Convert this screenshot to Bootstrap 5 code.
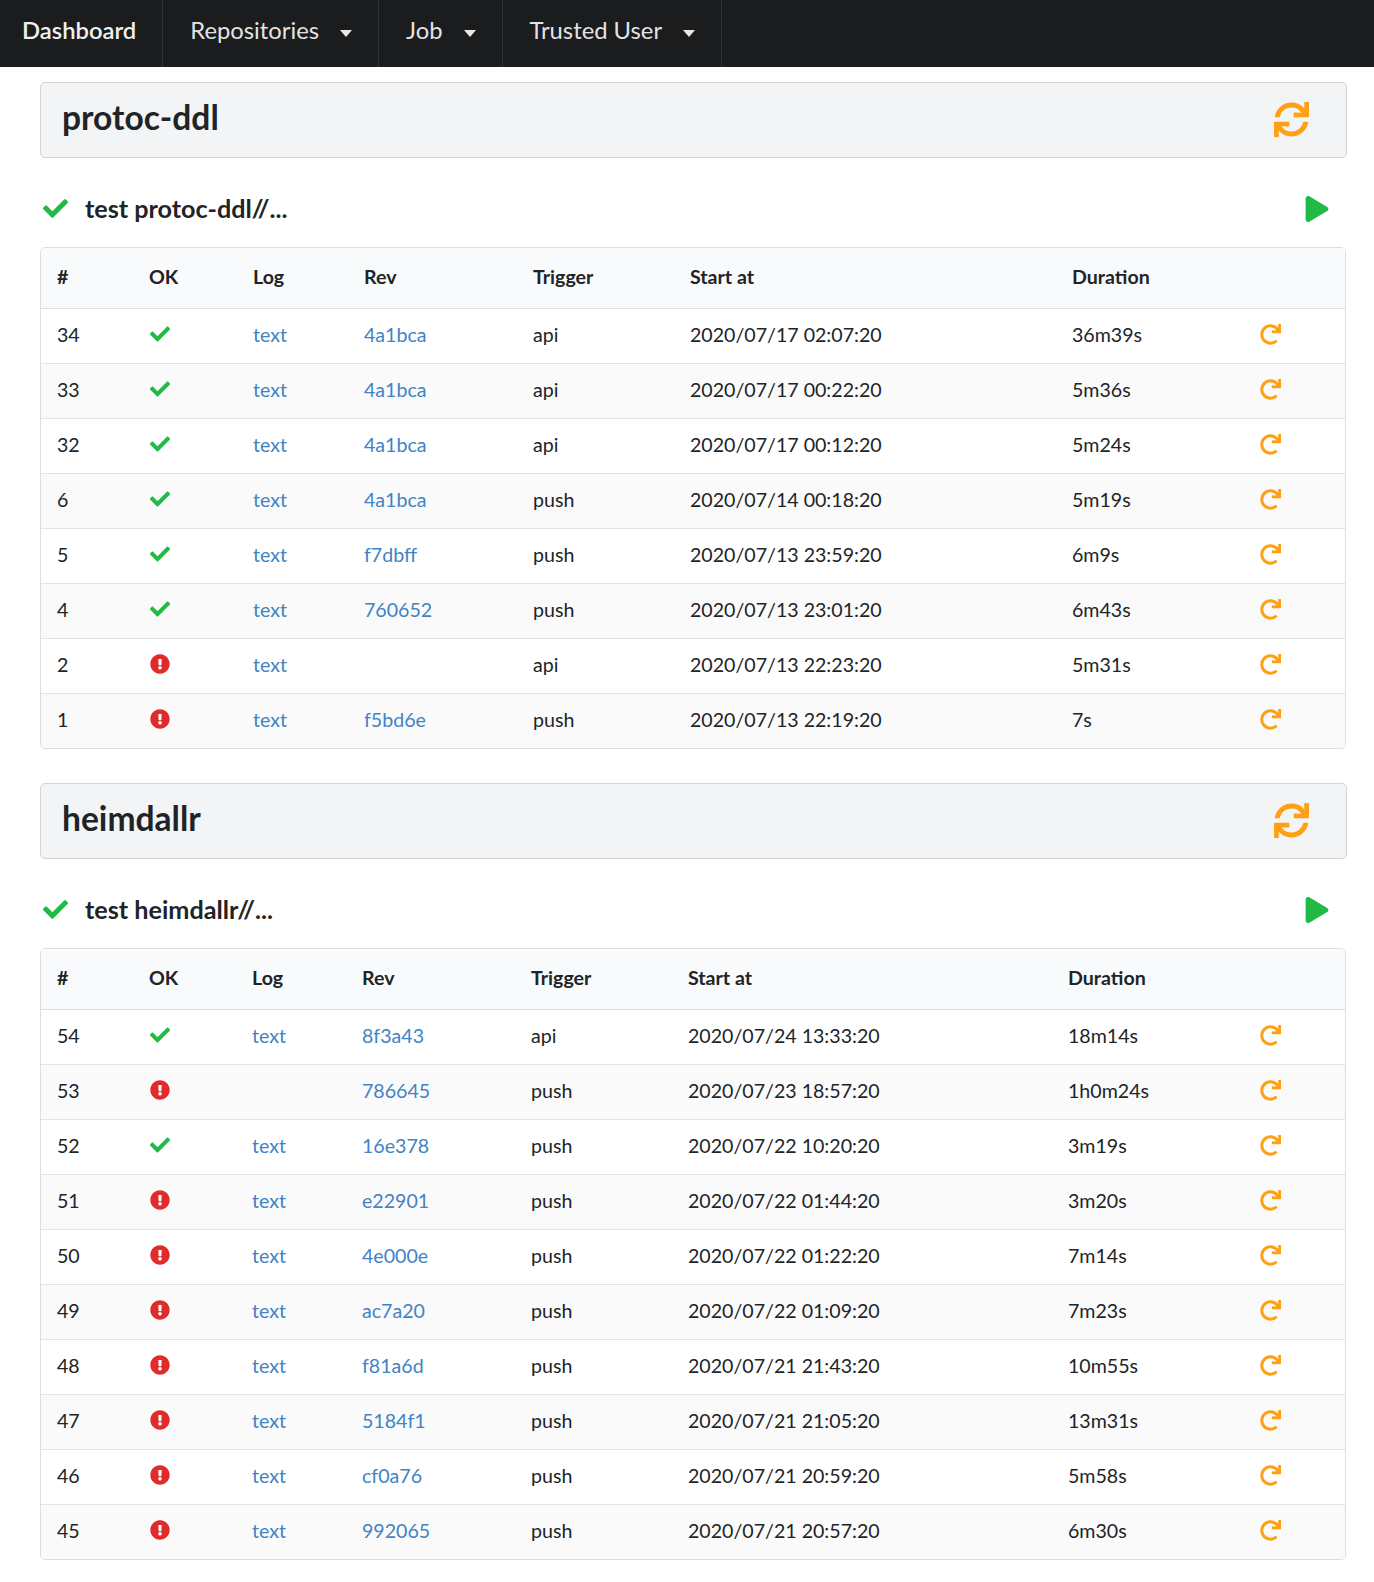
<!DOCTYPE html>
<html lang="en">
<head>
  <meta charset="utf-8">
  <title>Dashboard</title>
  <link href="https://cdn.jsdelivr.net/npm/bootstrap@5.3.0/dist/css/bootstrap.min.css" rel="stylesheet">
  <style>
    body { font-family: Lato, "Liberation Sans", sans-serif; font-size: 19.6px; color: #212427; background: #fff; }
    .top-bar { background: #1b1c1d; height: 67px; padding: 0; }
    .top-bar .nav-link { height: 67px; display: flex; align-items: center; padding: 0 26px 6px 27px; color: rgba(255,255,255,.9); font-size: 23.8px; border-right: 1px solid rgba(255,255,255,.1); }
    .top-bar .nav-link.brand-item { padding: 0 26px 6px 22px; font-weight: 600; color: #f0f0f0; }
    .top-bar .dropdown-toggle::after { margin-left: 21px; margin-top: 6px; border-top: 7px solid; border-left: 6px solid transparent; border-right: 6px solid transparent; border-bottom: 0; }
    .page-body { padding: 15px 27px 22px 40px; }
    .repo-head { background: #f3f4f5; border: 1px solid #d4d4d5; border-radius: 5px; height: 76px; padding: 0 37px 5px 21px; }
    .repo-head h1 { font-size: 33.6px; font-weight: 700; margin: 0; }
    .job-line { height: 89px; padding: 12px 18px 0 3px; }
    .job-line h2 { font-size: 25.2px; font-weight: 700; margin: 0 0 0 17px; }
    .runs-box { border: 1px solid #dededf; border-radius: 5px; overflow: hidden; margin: 0 1px 34px 0; }
    .runs-table { margin: 0; width: 100%; table-layout: fixed; font-size: 19.6px; }
    .runs-table th { background: #f9fafb; font-weight: 700; height: 60px; padding: 0 16px 3px; vertical-align: middle; border-bottom: 1px solid #dedfe0; color: #212427; }
    .runs-table td { height: 55px; padding: 0 16px 2px; vertical-align: middle; border-bottom: 1px solid #e2e3e4; color: #212427; }
    .runs-table tbody tr:nth-child(even) td { background: #fafafa; }
    .runs-table tbody tr:last-child td { border-bottom: 0; }
    .runs-table a { color: #4183c4; text-decoration: none; }
    .ic-orange { color: #ffa014; }
    .ic-green { color: #21ba45; }
    .ic-red { color: #e02b2b; }
    .ic-ok { width: 20px; height: 20px; display: block; margin: 0 0 1px 1px; }
    .ic-redo { width: 21px; height: 21px; display: block; }
    .ic-sync { width: 35px; height: 35px; margin-top: 4px; }
    .ic-job { width: 25px; height: 25px; }
    .ic-play { width: 24px; height: 26px; }
    .w-a { width: 92px; } .w-b { width: 104px; } .w-c { width: 111px; } .w-d { width: 169px; }
    .w-e { width: 157px; } .w-f { width: 382px; } .w-g { width: 188px; }
    .x-a { width: 92px; } .x-b { width: 103px; } .x-c { width: 110px; } .x-d { width: 169px; }
    .x-e { width: 157px; } .x-f { width: 380px; } .x-g { width: 192px; }
  </style>
</head>
<body>
  <svg class="d-none">
    <symbol id="i-check" viewBox="0 0 512 512"><path fill="currentColor" d="M173.898 439.404l-166.4-166.4c-9.997-9.997-9.997-26.206 0-36.204l36.203-36.204c9.997-9.998 26.207-9.998 36.204 0L192 312.69 432.095 72.596c9.997-9.997 26.207-9.997 36.204 0l36.203 36.204c9.997 9.997 9.997 26.206 0 36.204l-294.4 294.401c-9.998 9.997-26.207 9.997-36.204-.001z"/></symbol>
    <symbol id="i-alert" viewBox="0 0 512 512"><path fill="currentColor" d="M504 256c0 136.997-111.043 248-248 248S8 392.997 8 256C8 119.083 119.043 8 256 8s248 111.083 248 248zm-248 50c-25.405 0-46 20.595-46 46s20.595 46 46 46 46-20.595 46-46-20.595-46-46-46zm-43.673-165.346l7.418 136c.347 6.364 5.609 11.346 11.982 11.346h48.546c6.373 0 11.635-4.982 11.982-11.346l7.418-136c.375-6.874-5.098-12.654-11.982-12.654h-63.383c-6.884 0-12.356 5.78-11.981 12.654z"/></symbol>
    <symbol id="i-play" viewBox="0 0 448 512"><path fill="currentColor" d="M424.4 214.7L72.4 6.6C43.8-10.3 0 6.1 0 47.9V464c0 37.5 40.7 60.1 72.4 41.3l352-208c31.4-18.5 31.5-64.1 0-82.6z"/></symbol>
    <symbol id="i-redo" viewBox="0 0 512 512"><path fill="currentColor" d="M500.33 0h-47.41a12 12 0 0 0-12 12.57l4 82.76A247.42 247.42 0 0 0 256 8C119.34 8 7.9 119.53 8 256.19 8.1 393.07 119.1 504 256 504a247.1 247.1 0 0 0 166.18-63.91 12 12 0 0 0 .48-17.43l-34-34a12 12 0 0 0-16.38-.55A176 176 0 1 1 402.1 157.8l-101.53-4.87a12 12 0 0 0-12.57 12v47.41a12 12 0 0 0 12 12h200.33a12 12 0 0 0 12-12V12a12 12 0 0 0-12-12z"/></symbol>
    <symbol id="i-sync" viewBox="0 0 512 512"><path fill="currentColor" d="M440.65 12.57l4 82.77A247.16 247.16 0 0 0 255.83 8C134.73 8 33.91 94.92 12.29 209.82A12 12 0 0 0 24.09 224h49.05a12 12 0 0 0 11.67-9.26 175.91 175.91 0 0 1 317-56.94l-101.46-4.86a12 12 0 0 0-12.57 12v47.41a12 12 0 0 0 12 12H500a12 12 0 0 0 12-12V12a12 12 0 0 0-12-12h-47.37a12 12 0 0 0-11.98 12.57zM255.83 432a175.61 175.61 0 0 1-146-77.8l101.8 4.87a12 12 0 0 0 12.57-12v-47.4a12 12 0 0 0-12-12H12a12 12 0 0 0-12 12V500a12 12 0 0 0 12 12h47.35a12 12 0 0 0 12-12.6l-4.15-82.57A247.17 247.17 0 0 0 255.83 504c121.11 0 221.93-86.92 243.55-201.82a12 12 0 0 0-11.8-14.18h-49.05a12 12 0 0 0-11.67 9.26A175.86 175.86 0 0 1 255.83 432z"/></symbol>
  </svg>

  <nav class="navbar top-bar">
    <ul class="navbar-nav flex-row">
      <li class="nav-item"><a class="nav-link brand-item" href="#">Dashboard</a></li>
      <li class="nav-item"><a class="nav-link dropdown-toggle" href="#">Repositories</a></li>
      <li class="nav-item"><a class="nav-link dropdown-toggle" href="#">Job</a></li>
      <li class="nav-item"><a class="nav-link dropdown-toggle" href="#">Trusted User</a></li>
    </ul>
  </nav>

  <main class="page-body" id="page"></main>

  <script>
    var repos = [
      { name: "protoc-ddl", w: "w", runs: [
        ["34",1,1,"4a1bca","api","2020/07/17 02:07:20","36m39s"],
        ["33",1,1,"4a1bca","api","2020/07/17 00:22:20","5m36s"],
        ["32",1,1,"4a1bca","api","2020/07/17 00:12:20","5m24s"],
        ["6",1,1,"4a1bca","push","2020/07/14 00:18:20","5m19s"],
        ["5",1,1,"f7dbff","push","2020/07/13 23:59:20","6m9s"],
        ["4",1,1,"760652","push","2020/07/13 23:01:20","6m43s"],
        ["2",0,1,"","api","2020/07/13 22:23:20","5m31s"],
        ["1",0,1,"f5bd6e","push","2020/07/13 22:19:20","7s"]
      ]},
      { name: "heimdallr", w: "x", runs: [
        ["54",1,1,"8f3a43","api","2020/07/24 13:33:20","18m14s"],
        ["53",0,0,"786645","push","2020/07/23 18:57:20","1h0m24s"],
        ["52",1,1,"16e378","push","2020/07/22 10:20:20","3m19s"],
        ["51",0,1,"e22901","push","2020/07/22 01:44:20","3m20s"],
        ["50",0,1,"4e000e","push","2020/07/22 01:22:20","7m14s"],
        ["49",0,1,"ac7a20","push","2020/07/22 01:09:20","7m23s"],
        ["48",0,1,"f81a6d","push","2020/07/21 21:43:20","10m55s"],
        ["47",0,1,"5184f1","push","2020/07/21 21:05:20","13m31s"],
        ["46",0,1,"cf0a76","push","2020/07/21 20:59:20","5m58s"],
        ["45",0,1,"992065","push","2020/07/21 20:57:20","6m30s"]
      ]}
    ];

    function icon(id, cls) {
      return '<svg class="' + cls + '"><use href="#i-' + id + '"></use></svg>';
    }

    var html = "";
    repos.forEach(function (repo) {
      var rows = repo.runs.map(function (r) {
        var ok = r[1] ? icon("check", "ic-ok ic-green") : icon("alert", "ic-ok ic-red");
        return "<tr><td>" + r[0] + "</td><td>" + ok + "</td><td>" +
          (r[2] ? '<a href="#">text</a>' : "") + "</td><td>" +
          (r[3] ? '<a href="#">' + r[3] + "</a>" : "") + "</td><td>" + r[4] + "</td><td>" + r[5] + "</td><td>" + r[6] +
          '</td><td><a href="#">' + icon("redo", "ic-redo ic-orange") + "</a></td></tr>";
      }).join("");
      var cols = ["a","b","c","d","e","f","g"].map(function (c) {
        return '<col class="' + repo.w + "-" + c + '">';
      }).join("");
      html += '<div class="repo-head d-flex align-items-center justify-content-between"><h1>' + repo.name + "</h1>" +
        icon("sync", "ic-sync ic-orange") + "</div>" +
        '<div class="job-line d-flex align-items-center"><svg class="ic-job ic-green"><use href="#i-check"></use></svg><h2>test ' + repo.name + "//...</h2>" +
        '<svg class="ic-play ic-green ms-auto"><use href="#i-play"></use></svg></div>' +
        '<div class="runs-box"><table class="table runs-table"><colgroup>' + cols + "<col></colgroup><thead><tr>" +
        "<th>#</th><th>OK</th><th>Log</th><th>Rev</th><th>Trigger</th><th>Start at</th><th>Duration</th><th></th></tr></thead><tbody>" +
        rows + "</tbody></table></div>";
    });
    document.getElementById("page").innerHTML = html;
  </script>
  <script src="https://cdn.jsdelivr.net/npm/bootstrap@5.3.0/dist/js/bootstrap.bundle.min.js"></script>
</body>
</html>
